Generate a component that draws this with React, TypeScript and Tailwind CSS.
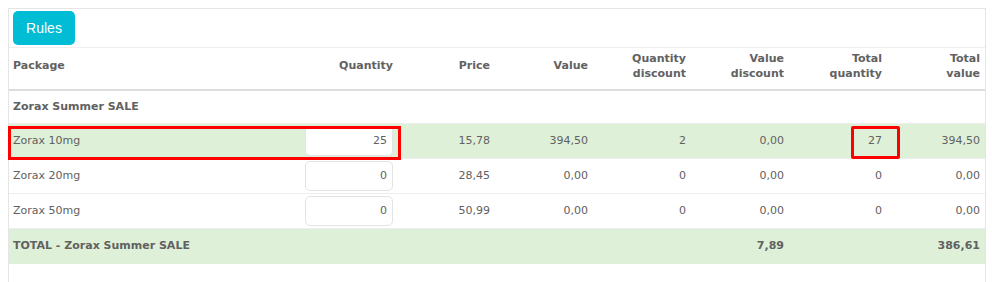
import React from 'react';

const rows = [
  { name: 'Zorax 10mg', qty: '25', price: '15,78', value: '394,50', qd: '2', vd: '0,00', tq: '27', tv: '394,50', active: true },
  { name: 'Zorax 20mg', qty: '0', price: '28,45', value: '0,00', qd: '0', vd: '0,00', tq: '0', tv: '0,00', active: false },
  { name: 'Zorax 50mg', qty: '0', price: '50,99', value: '0,00', qd: '0', vd: '0,00', tq: '0', tv: '0,00', active: false },
];

const num = 'text-right pr-[5px] align-middle';
const head = 'text-right pr-[5px] pb-[5px] align-middle';

export default function App() {
  return (
    <div className="w-[992px] h-[282px] bg-white pt-2 pl-2 pr-[6px] text-[11px] text-[#616161]" style={{ fontFamily: '"DejaVu Sans", Verdana, sans-serif' }}>
      <div className="relative h-full border-l border-t border-r border-[#e5e5e5]">
        <div className="pl-1 pt-[2px] pb-[2px]">
          <button
            className="h-[34px] w-[62px] rounded-[5px] bg-[#00bcd4] text-[14px] text-white"
            style={{ fontFamily: '"Liberation Sans", Arial, sans-serif' }}
          >
            Rules
          </button>
        </div>

        <table className="w-full table-fixed border-collapse">
          <colgroup>
            <col className="w-[290px]" />
            <col className="w-[98px]" />
            <col className="w-[98px]" />
            <col className="w-[98px]" />
            <col className="w-[98px]" />
            <col className="w-[98px]" />
            <col className="w-[98px]" />
            <col className="w-[98px]" />
          </colgroup>
          <thead>
            <tr className="h-[42px] border-t border-[#eeeeee] border-b-2 border-b-[#dddddd] font-bold leading-[15px]">
              <th className="text-left pl-[4px] pb-[5px] align-middle">Package</th>
              <th className="text-right pr-[4px] pb-[5px] align-middle">Quantity</th>
              <th className={head}>Price</th>
              <th className={head}>Value</th>
              <th className={head}>Quantity<br />discount</th>
              <th className={head}>Value<br />discount</th>
              <th className={head}>Total<br />quantity</th>
              <th className={head}>Total<br />value</th>
            </tr>
          </thead>
          <tbody>
            <tr className="h-[34px] border-b border-[#eeeeee]">
              <td colSpan={8} className="pl-[4px] pt-[1px] font-bold align-middle">Zorax Summer SALE</td>
            </tr>
            {rows.map((r) => (
              <tr key={r.name} className={`h-[35px] border-b border-[#eeeeee] ${r.active ? 'bg-[#dff0d8]' : ''}`}>
                <td className="pl-[4px] pt-[1px] align-middle">{r.name}</td>
                <td className="pr-[4px] align-middle">
                  <div className="ml-auto flex h-[30px] w-[88px] items-center justify-end rounded-[5px] border border-[#e3e3e3] bg-white pr-[5px]">
                    {r.qty}
                  </div>
                </td>
                <td className={num}>{r.price}</td>
                <td className={num}>{r.value}</td>
                <td className={num}>{r.qd}</td>
                <td className={num}>{r.vd}</td>
                <td className={num}>{r.tq}</td>
                <td className={num}>{r.tv}</td>
              </tr>
            ))}
            <tr className="h-[35px] bg-[#dff0d8] font-bold">
              <td colSpan={5} className="pl-[4px] align-middle">TOTAL - Zorax Summer SALE</td>
              <td className={num}>7,89</td>
              <td></td>
              <td className={num}>386,61</td>
            </tr>
          </tbody>
        </table>

        <div className="absolute left-[-1px] top-[117px] h-[34px] w-[393px] border-[3px] border-[#ff0000]" />
        <div className="absolute left-[842px] top-[117px] h-[33px] w-[49px] rounded-[2px] border-[3px] border-[#ff0000]" />
      </div>
    </div>
  );
}
